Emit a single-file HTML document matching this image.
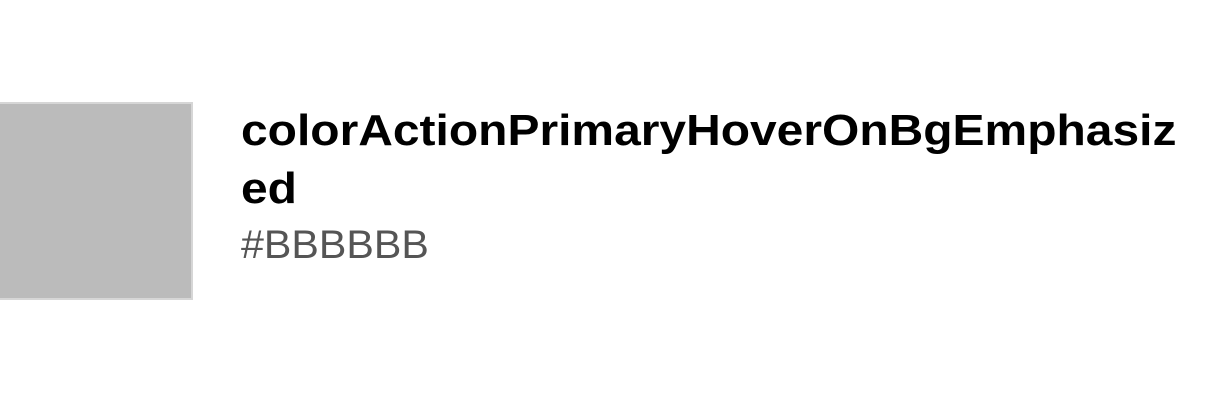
<!DOCTYPE html>
<html><head><meta charset="utf-8"><style>
html,body{margin:0;padding:0;background:#fff;width:1206px;height:402px;overflow:hidden;font-family:"Liberation Sans",Arial,sans-serif;}
.sw{position:absolute;left:0;top:102px;width:191px;height:194px;background:#bbb;border:2px solid #d6d6d6;border-left:none;}
.t{position:absolute;left:241px;white-space:nowrap;transform-origin:0 0;}
.b{font-weight:bold;font-size:44px;color:#000;transform:scaleX(1.09);}
.h{font-size:40px;color:#555;transform:scaleX(1.03);}
</style></head><body>
<div class="t b" style="top:109px;line-height:44px">colorActionPrimaryHoverOnBgEmphasiz</div>
<div class="sw"></div>
<div class="t b" style="top:167px;line-height:44px">ed</div>
<div class="t h" style="top:224px;line-height:42px">#BBBBBB</div>
</body></html>
